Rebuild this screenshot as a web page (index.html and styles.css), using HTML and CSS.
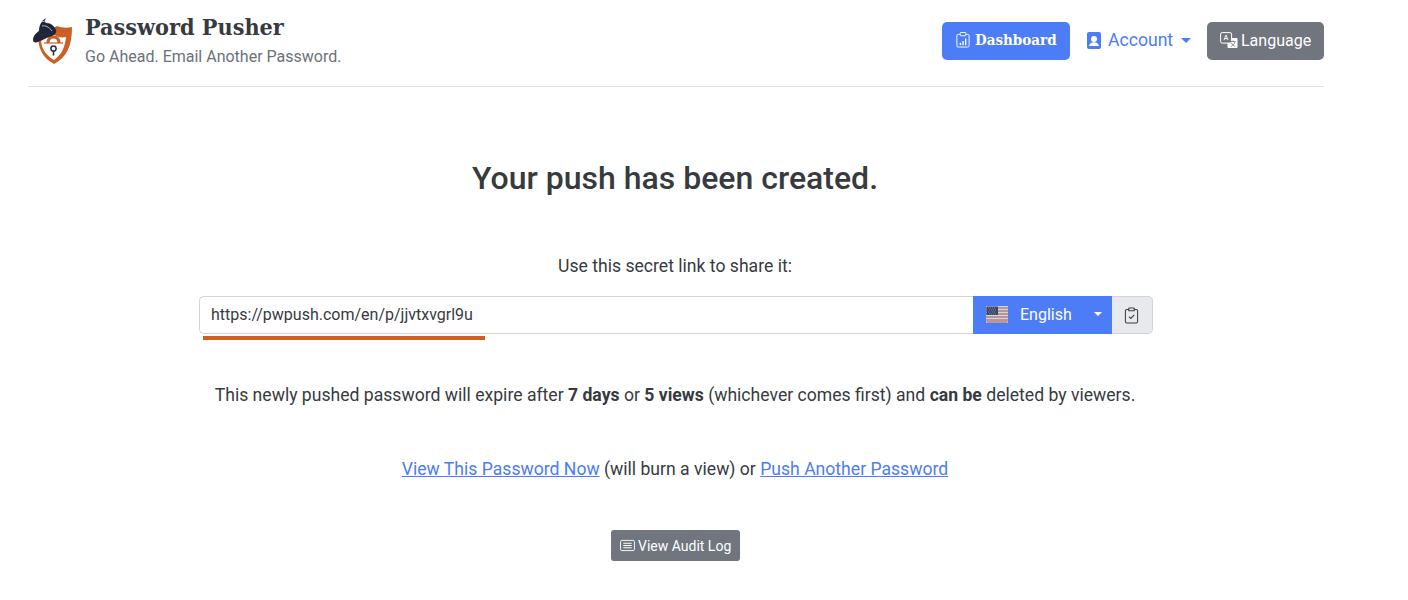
FILE: index.html
```html
<!DOCTYPE html>
<html lang="en">
<head>
<meta charset="utf-8">
<title>Password Pusher</title>
<link rel="stylesheet" href="styles.css">
</head>
<body>
<div class="page">
  <header class="header">
    <a class="brand" href="#">
      <svg class="logo" viewBox="0 0 40 48" aria-hidden="true">
        <path d="M5 18 L24 9 C29 11 34 11 39 10 C39 29 34 40 21 47 C10 41 5 32 5 18 Z" fill="#cb5f24"/>
        <path d="M8 24 L20 17 C24 20 28 21 33 20 C32 31 28 38 21 43 C14 39 9 33 8 24 Z" fill="#fff"/>
        <path d="M15 26 C15 22 17 20 20.500 20 C24 20 26 22 26 26" fill="none" stroke="#cb5f24" stroke-width="3"/>
        <path d="M11 26 H30" stroke="#cb5f24" stroke-width="1.200"/>
        <circle cx="20.500" cy="31.500" r="2.600" fill="none" stroke="#2a2f3d" stroke-width="1.500"/>
        <path d="M20.500 34 V38.500" stroke="#2a2f3d" stroke-width="1.600"/>
        <path d="M0 23 C0 19 3 16 6 14 C6 9 8 4 13 1 C11 4 12 6 14 6 C18 6 21 9 23 13 C24 15 22 18 19 19 C13 21 9 23 5 25 C2 26 0 25 0 23 Z" fill="#20263a"/>
        <path d="M9 9 C12 8 16 10 19 14 M8 5 C10 4 13 4 15 6" fill="none" stroke="#c9ccd4" stroke-width=".9"/>
      </svg>
      <span class="brand-text">
        <span class="brand-name">Password Pusher</span>
        <span class="brand-tag">Go Ahead. Email Another Password.</span>
      </span>
    </a>
    <nav class="nav">
      <a class="btn btn-primary btn-dash" href="#">
        <svg class="ico" viewBox="0 0 16 17" aria-hidden="true"><path d="M11 2.500h2A1.500 1.500 0 0 1 14.500 4v10.500A1.500 1.500 0 0 1 13 16H3a1.500 1.500 0 0 1-1.500-1.500V4A1.500 1.500 0 0 1 3 2.500h2" fill="none" stroke="currentColor"/><rect x="5" y=".5" width="6" height="3.500" rx=".8" fill="none" stroke="currentColor"/><path d="M4.500 11.500h1.500V14H4.500zM7.300 9.500h1.500V14H7.300zM10.100 7h1.500v7h-1.500z" fill="currentColor"/></svg>
        <span class="slab">Dashboard</span>
      </a>
      <a class="nav-link" href="#">
        <svg class="ico ico-acc" viewBox="0 0 14 17" aria-hidden="true"><path d="M2 0h10a2 2 0 0 1 2 2v13a2 2 0 0 1-2 2H2a2 2 0 0 1-2-2V2a2 2 0 0 1 2-2z" fill="currentColor"/><circle cx="7" cy="7" r="3" fill="#fff"/><path d="M2 14c.6-2.800 2.600-3.800 5-3.800s4.400 1 5 3.800z" fill="#fff"/></svg>
        <span>Account</span>
        <span class="caret"></span>
      </a>
      <a class="btn btn-gray" href="#">
        <svg class="ico ico-lang" viewBox="0 0 18 16" aria-hidden="true"><rect x=".6" y=".6" width="11" height="10.500" rx="1.500" fill="none" stroke="currentColor"/><path d="M4 8l2-5 2 5M4.700 6.600h2.600" fill="none" stroke="currentColor" stroke-width=".9"/><path d="M8 6h8.500a1 1 0 0 1 1 1v8a1 1 0 0 1-1 1H8.500a1 1 0 0 1-1-1v-4h3a1.500 1.500 0 0 0 1.500-1.500V6z" fill="currentColor"/><path d="M10.500 9.500h5M13 8.500v1M11 14.500c2-1 3.400-2.500 4-5M11.500 11c.8 1.600 2 2.700 3.800 3.500" fill="none" stroke="#70757e" stroke-width=".8"/></svg>
        <span>Language</span>
      </a>
    </nav>
  </header>

  <main class="main">
    <h1 class="title">Your push has been created.</h1>
    <p class="lead">Use this secret link to share it:</p>
    <div class="link-group">
      <div class="link-wrap">
        <div class="link-input">https://pwpush.com/en/p/jjvtxvgrl9u</div>
        <div class="link-bar"></div>
      </div>
      <a class="lang-select" href="#">
        <svg class="flag" viewBox="0 0 22 17" aria-hidden="true">
          <rect x="0" y="0" width="22" height="17" fill="#d6d6da"/>
          <path d="M0 2h22M0 5h22M0 8h22M0 11h22M0 14h22" stroke="#a98088" stroke-width="1.400"/>
          <path d="M.5 16h21" stroke="#a65a50" stroke-width="1"/>
          <rect x=".5" y=".5" width="11.500" height="8.500" fill="#3d4568"/>
          <path d="M2 2h8M3 4h7M2 6h8M3 8h7" stroke="#8f93ad" stroke-width=".8" stroke-dasharray="1 1"/>
        </svg>
        <span class="lang-name">English</span>
        <span class="caret caret-sm"></span>
      </a>
      <a class="copy" href="#">
        <svg viewBox="0 0 16 18" width="15" height="17" aria-hidden="true"><path d="M10.500 2.500h2.500a1.500 1.500 0 0 1 1.500 1.500v11.500a1.500 1.500 0 0 1-1.500 1.500H3a1.500 1.500 0 0 1-1.500-1.500V4A1.500 1.500 0 0 1 3 2.500h2.500" fill="none" stroke="#3a3d42" stroke-width="1.100"/><rect x="5" y="1" width="6" height="3" rx=".7" fill="none" stroke="#3a3d42" stroke-width="1.100"/><path d="M5.300 10.200l2 1.900 3.600-3.700" fill="none" stroke="#3a3d42" stroke-width="1.200"/></svg>
      </a>
    </div>
    <p class="expire">This newly pushed password will expire after <b>7 days</b> or <b>5 views</b> (whichever comes first) and <b>can be</b> deleted by viewers.</p>
    <p class="links"><a href="#">View This Password Now</a> (will burn a view) or <a href="#">Push Another Password</a></p>
    <a class="btn btn-gray btn-sm" href="#">
      <svg class="ico ico-log" viewBox="0 0 16 14" aria-hidden="true"><rect x=".5" y="1.500" width="15" height="11" rx="1.500" fill="none" stroke="currentColor"/><path d="M3.500 4.500h9M3.500 7h9M3.500 9.500h9" stroke="currentColor" stroke-width="1.100"/></svg>
      <span>View Audit Log</span>
    </a>
  </main>
</div>
</body>
</html>
```
FILE: styles.css
```css
* { box-sizing: border-box; }
html, body { margin: 0; padding: 0; background: #fff; }
body { font-family: Roboto, "Liberation Sans", sans-serif; font-size: 16px; color: #373a3f; height: 600px; overflow: hidden; }
.page { width: 1296px; margin-left: 28px; }
a { text-decoration: none; }

.header { height: 87px; border-bottom: 1px solid #e1e3e6; display: flex; justify-content: space-between; align-items: flex-start; }
.brand { display: flex; align-items: flex-start; color: inherit; margin-top: 12px; }
.logo { width: 40px; height: 48px; margin: 5px 12px 0 5px; flex: none; }
.brand-text { display: flex; flex-direction: column; }
.brand-name { font-family: "DejaVu Serif Condensed", "DejaVu Serif", serif; font-stretch: condensed; font-weight: 700; font-size: 23.200px; line-height: 30px; color: #373a3f; }
.brand-tag { font-size: 16px; line-height: 24px; color: #6c717a; margin-top: 3px; }

.nav { display: flex; align-items: center; margin-top: 22px; }
.btn { display: inline-flex; align-items: center; height: 38px; border-radius: 5px; color: #fff; font-size: 16px; }
.nav .btn, .nav-link { padding-bottom: 2px; }
.btn-primary { background: #4c7cf6; }
.btn-dash { width: 128px; padding-left: 13px; gap: 4px; }
.slab { font-family: "DejaVu Serif Condensed", "DejaVu Serif", serif; font-stretch: condensed; font-weight: 700; font-size: 15px; }
.btn-gray { background: #70757e; }
.nav > .btn-gray { width: 117px; padding-left: 13px; gap: 3px; }
.ico { width: 16px; height: 16px; flex: none; }
.ico-lang { width: 18px; }
.nav-link { display: inline-flex; align-items: center; color: #4c7cf6; width: 137px; padding-left: 17px; gap: 7px; height: 38px; font-size: 17.600px; }
.ico-acc { width: 14px; height: 17px; }
.caret { width: 0; height: 0; border-left: 5px solid transparent; border-right: 5px solid transparent; border-top: 5px solid currentColor; margin-left: 1px; }

.main { display: flex; flex-direction: column; align-items: center; width: 1294px; font-size: 17.600px; }
.title { margin: 69px 0 0; font-size: 32px; font-weight: 500; line-height: 44px; color: #373a3f; }
.lead { margin: 54px 0 0; line-height: 24px; }
.link-group { display: flex; width: 954px; height: 38px; margin-top: 18px; align-self: flex-start; margin-left: 171px; font-size: 16px; }
.link-wrap { position: relative; flex: 1; }
.link-input { height: 38px; line-height: 36px; padding-left: 11px; border: 1px solid #d0d3d8; border-right: 0; border-radius: 5px 0 0 5px; color: #373a3f; }
.link-bar { position: absolute; left: 4px; top: 40px; width: 282px; height: 4px; background: #cf5f22; }
.lang-select { width: 139px; background: #4c7cf6; color: #fff; display: flex; align-items: center; padding-left: 13px; padding-bottom: 2px; }
.flag { width: 22px; height: 17px; flex: none; }
.lang-name { margin-left: 12px; }
.caret-sm { border-left-width: 4px; border-right-width: 4px; border-top-width: 4px; margin-left: 22px; }
.copy { width: 41px; background: #e8e9ed; border: 1px solid #d0d3d8; border-left: 0; border-radius: 0 5px 5px 0; display: flex; align-items: center; justify-content: center; padding-right: 2px; }
.expire { margin: 49px 0 0; line-height: 24px; }
.expire b { font-weight: 700; }
.links { margin: 50px 0 0; line-height: 24px; }
.links a { color: #4c7cf6; text-decoration: underline; }
.btn-sm { height: 31px; width: 129px; margin-top: 49px; font-size: 14px; padding-left: 9px; gap: 3.500px; border-radius: 3px; }
.ico-log { width: 15px; height: 13px; }
```
